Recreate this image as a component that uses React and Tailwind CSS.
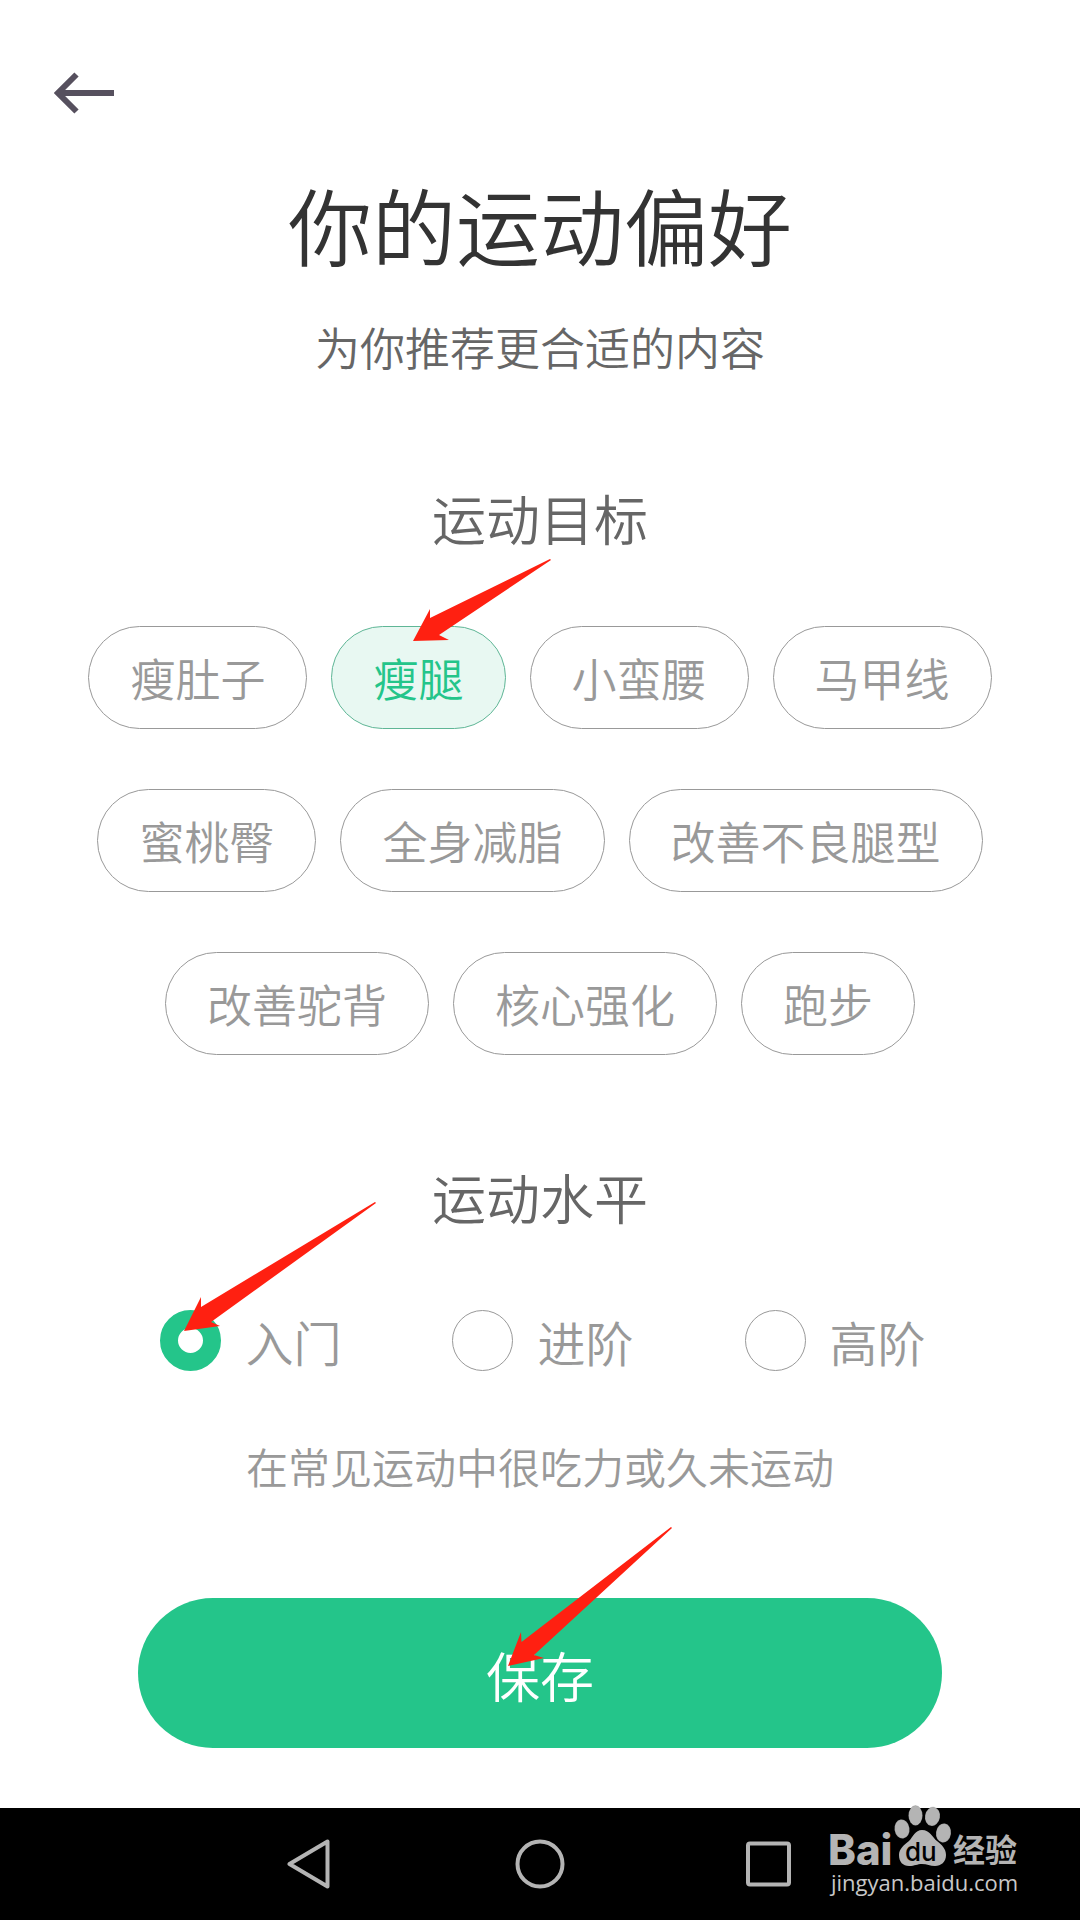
import { useState } from "react";

const goals = [
  "瘦肚子",
  "瘦腿",
  "小蛮腰",
  "马甲线",
  "蜜桃臀",
  "全身减脂",
  "改善不良腿型",
  "改善驼背",
  "核心强化",
  "跑步",
];

const levels = [
  { id: "beginner", label: "入门", hint: "在常见运动中很吃力或久未运动" },
  { id: "middle", label: "进阶", hint: "有一定运动基础" },
  { id: "advanced", label: "高阶", hint: "有长期运动习惯" },
];

function BackIcon() {
  return (
    <svg width="60" height="42" viewBox="0 0 60 42" fill="none" stroke="#56505e" strokeWidth="6">
      <path d="M22.5 2.5 L4 21 L22.5 39.5" />
      <path d="M6 21 H60" />
    </svg>
  );
}

function GoalArrow() {
  return (
    <svg
      className="absolute left-[82px] -top-[67px] pointer-events-none"
      width="138"
      height="82"
      viewBox="0 0 138 82"
      fill="#ff2011"
    >
      <path d="M137 0 L17 59 L17 50 L0 82 L36 81 L26 76 L138 1 Z" />
    </svg>
  );
}

function LevelArrow() {
  return (
    <svg
      className="absolute left-6 -top-[108px] pointer-events-none"
      width="192"
      height="129"
      viewBox="0 0 192 129"
      fill="#ff2011"
    >
      <path d="M191 0 L17 105 L17 95 L0 129 L36 124 L27 120 L192 1 Z" />
    </svg>
  );
}

function SaveArrow() {
  return (
    <svg
      className="absolute left-1/2 -ml-8 -top-[71px] pointer-events-none"
      width="164"
      height="139"
      viewBox="0 0 164 139"
      fill="#ff2011"
    >
      <path d="M163 0 L13.5 115 L13 105 L0 139 L36 131 L26 128 L164 1 Z" />
    </svg>
  );
}

function Watermark() {
  return (
    <div className="absolute right-[58px] bottom-5 pointer-events-none">
      <svg width="194" height="98" viewBox="0 0 194 98" className="overflow-visible">
        <g fill="#b4b4b4" stroke="#000" strokeOpacity="0.12">
          <ellipse cx="74" cy="27" rx="7.500" ry="9.500" transform="rotate(-8 74 27)" />
          <ellipse cx="87.500" cy="13.500" rx="7" ry="10" />
          <ellipse cx="104.500" cy="14.500" rx="7.500" ry="9.500" transform="rotate(10 104.500 14.500)" />
          <ellipse cx="115.500" cy="31" rx="7.500" ry="9.500" transform="rotate(8 115.500 31)" />
        </g>
        <path
          fill="#b4b4b4"
          d="M94 28 C102 28 104 35 109 39 C114 43 118 47 118 53 C118 60 113 64 107 64 C102 64 99 62 94 62 C89 62 87 64 81 64 C75 64 71 60 71 53 C71 47 76 43 81 39 C85 35 87 28 94 28 Z"
        />
        <text x="0" y="63" fontSize="42" fontWeight="800" fill="#b4b4b4" fontFamily="Inter, sans-serif">
          Bai
        </text>
        <text x="77" y="59" fontSize="26" fontWeight="500" fill="#000" fontFamily="Inter, sans-serif">
          du
        </text>
        <text
          x="125"
          y="60"
          fontSize="32"
          fontWeight="bold"
          fill="#b4b4b4"
          fontFamily="'Noto Sans CJK SC', sans-serif"
        >
          经验
        </text>
        <text x="3" y="89" fontSize="22" fontWeight="400" fill="#c8c8c8" fontFamily="'Open Sans', sans-serif">
          jingyan.baidu.com
        </text>
      </svg>
    </div>
  );
}

export default function App() {
  const [selectedGoals, setSelectedGoals] = useState(["瘦腿"]);
  const [level, setLevel] = useState("beginner");

  const toggleGoal = (goal) => {
    setSelectedGoals((prev) =>
      prev.includes(goal) ? prev.filter((g) => g !== goal) : [...prev, goal]
    );
  };

  const currentLevel = levels.find((l) => l.id === level);

  return (
    <div className="min-h-screen flex flex-col bg-white font-['Noto_Sans_CJK_SC',sans-serif] font-[350]">
      <header className="flex pt-[72px] pl-[54px]">
        <button type="button" aria-label="返回">
          <BackIcon />
        </button>
      </header>

      <main className="flex flex-col items-center pt-[60px] pb-[60px]">
        <h1 className="text-[84px] leading-[100px] font-[350] text-[#333]">你的运动偏好</h1>
        <p className="mt-[43px] text-[45px] leading-[60px] text-[#666]">为你推荐更合适的内容</p>

        <h2 className="mt-[111px] text-[54px] leading-[60px] font-[350] text-[#666]">运动目标</h2>
        <div className="mt-[78px] px-10 flex flex-wrap justify-center gap-x-6 gap-y-[60px]">
          {goals.map((goal) => (
            <div key={goal} className="relative">
              <button
                type="button"
                aria-pressed={selectedGoals.includes(goal)}
                onClick={() => toggleGoal(goal)}
                className={`h-[103px] px-[41px] rounded-full border text-[45px] leading-[60px] ${
                  selectedGoals.includes(goal)
                    ? "border-[#5fb696] bg-[#e8f8f2] text-[#24c58a]"
                    : "border-[#999] text-[#999]"
                }`}
              >
                {goal}
              </button>
              {goal === "瘦腿" && <GoalArrow />}
            </div>
          ))}
        </div>

        <h2 className="mt-[112px] text-[54px] leading-[60px] font-[350] text-[#666]">运动水平</h2>
        <div className="mt-[83px] pl-1.5 flex gap-[111px]">
          {levels.map((item) => (
            <label
              key={item.id}
              className="relative flex items-center gap-6 text-[48px] leading-[60px] text-[#999]"
            >
              <input
                type="radio"
                name="level"
                value={item.id}
                checked={level === item.id}
                onChange={() => setLevel(item.id)}
                className="appearance-none size-[61px] rounded-full border border-[#999] checked:border-[18px] checked:border-[#24c58a]"
              />
              {item.label}
              {item.id === "beginner" && <LevelArrow />}
            </label>
          ))}
        </div>
        <p className="mt-[65px] text-[42px] leading-[60px] text-[#999]">{currentLevel.hint}</p>

        <div className="mt-[102px] w-full px-[138px]">
          <div className="relative">
            <button
              type="button"
              className="w-full h-[150px] pt-1 rounded-full bg-[#24c58a] text-[54px] leading-[60px] text-white"
            >
              保存
            </button>
            <SaveArrow />
          </div>
        </div>
      </main>

      {/* system navigation bar */}
      <nav className="relative mt-auto h-28 flex items-center justify-center gap-[180px] bg-black">
        <button type="button" aria-label="后退">
          <svg width="50" height="50" viewBox="0 0 50 50" fill="none" stroke="#b4b4b4" strokeWidth="4" strokeLinejoin="round">
            <path d="M4.500 25 L42.500 2.500 V47.500 Z" />
          </svg>
        </button>
        <button type="button" aria-label="主页">
          <svg width="50" height="50" viewBox="0 0 50 50" fill="none" stroke="#b4b4b4" strokeWidth="4">
            <circle cx="25" cy="25" r="22.500" />
          </svg>
        </button>
        <button type="button" aria-label="最近任务">
          <svg width="50" height="50" viewBox="0 0 50 50" fill="none" stroke="#b4b4b4" strokeWidth="4">
            <rect x="3" y="4.500" width="41" height="41" rx="2" />
          </svg>
        </button>
        <Watermark />
      </nav>
    </div>
  );
}
